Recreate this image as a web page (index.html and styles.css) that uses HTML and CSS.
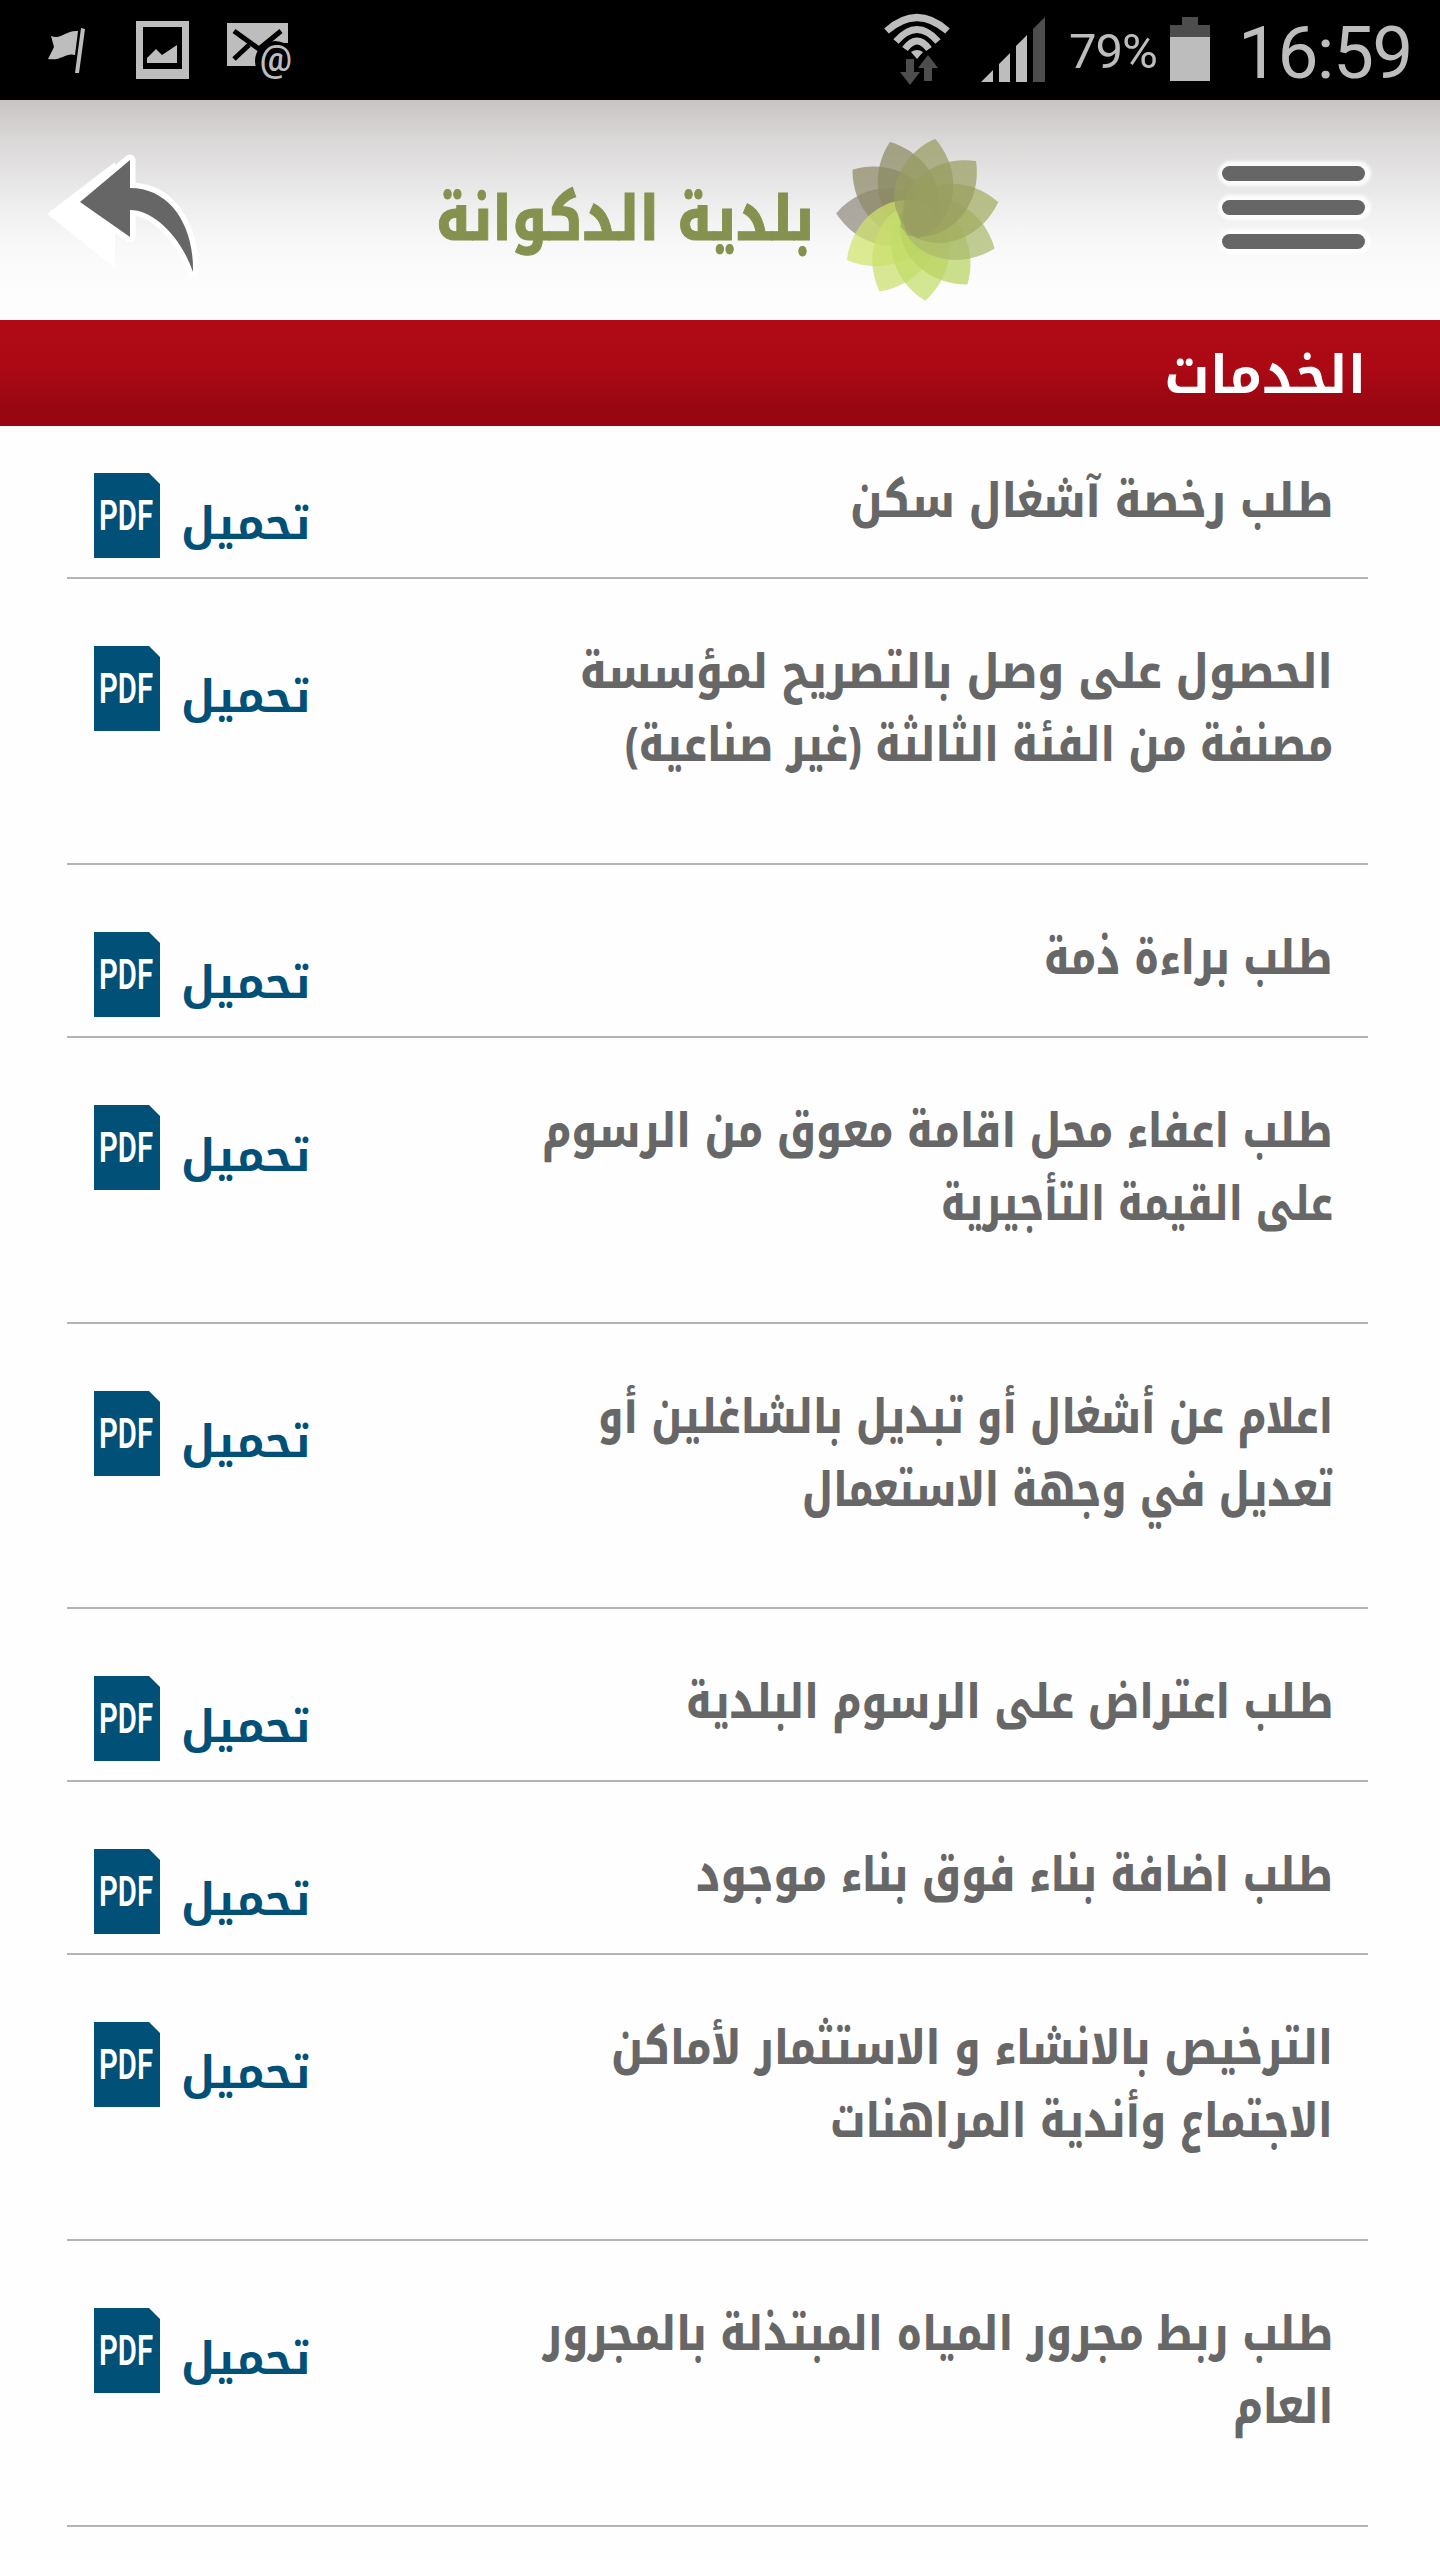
FILE: index.html
```
<!DOCTYPE html>
<html lang="ar" dir="rtl">
<head>
    <meta charset="utf-8">
    <title>بلدية الدكوانة</title>
    <link rel="stylesheet" href="styles.css">
</head>
<body>
    <div class="status-bar">
        <div class="status-left">
            <svg class="flag" width="38" height="46" viewBox="0 0 38 46">
                <path d="M3 8 C14 12 17 2 30 3 L27 27 C18 24 14 33 0 31 L6 19Z M33 0 L37 1 L31 45 L27 45Z"/>
            </svg>
            <svg class="photo" width="53" height="58" viewBox="0 0 53 58">
                <path fill-rule="evenodd" d="M0 0H53V58H0Z M7 6V48H46V6Z"/>
                <path d="M11 42V37L20 28L26 34L41 24V42Z"/>
            </svg>
            <svg class="mail" width="66" height="56" viewBox="0 0 66 56">
                <path d="M0 0H61V20H48L34 30L29 43H0Z"/>
                <path class="cut" d="M7 8L32 26L54 8M7 36L22 22"/>
                <circle cx="48" cy="38" r="20" fill="#000"/>
                <text x="49" y="48" text-anchor="middle">@</text>
            </svg>
        </div>
        <div class="status-right">
            <svg class="wifi" width="66" height="84" viewBox="0 0 66 84">
                <path class="wave" d="M2.500 24Q33 -3 63.500 24M12 34.500Q33 10.500 54 34.500M21 42Q33 26 45 42"/>
                <path d="M27 45Q33 41 39 45L33 52Z"/>
                <path class="dim" d="M22 52H30V65H36L26 78L16 65H22ZM40 74V61H34L44 48L54 61H48V74Z"/>
            </svg>
            <svg class="signal" width="64" height="65" viewBox="0 0 64 65">
                <path d="M0 65L12 53V65ZM18 47L29 36V65H18ZM35 29L46 18V65H35Z"/>
                <path class="dim" d="M52 12L64 0V65H52Z"/>
            </svg>
            <span class="percent">79%</span>
            <svg class="battery" width="40" height="64" viewBox="0 0 40 64">
                <path class="dim" d="M12 0H28V8H40V20H0V8H12Z"/>
                <path d="M0 20H40V64H0Z"/>
            </svg>
            <span class="clock">16:59</span>
        </div>
    </div>

    <header>
        <div class="menu">
            <i></i>
            <i></i>
            <i></i>
        </div>
        <svg class="logo" width="570" height="180" viewBox="0 0 570 180" direction="rtl">
            <defs>
                <path id="petal" d="M0 -82C19 -68 29 -47 29 -27C29 -6 18 10 4 19C-16 10 -29 -6 -29 -27C-29 -47 -19 -68 0 -82Z"/>
            </defs>
            <text x="384" y="120" textLength="378" lengthAdjust="spacingAndGlyphs">بلدية الدكوانة</text>
            <g class="flower" transform="translate(488 99)">
                <use href="#petal" fill="#918c80" transform="rotate(-86)"/>
                <use href="#petal" fill="#8d8968" transform="rotate(-53)"/>
                <use href="#petal" fill="#8b8b62" transform="rotate(-20)"/>
                <use href="#petal" fill="#d0e36c" transform="rotate(-120)"/>
                <use href="#petal" fill="#c9df6c" transform="rotate(-152)"/>
                <use href="#petal" fill="#c2dd66" transform="rotate(175)"/>
                <use href="#petal" fill="#b9d261" transform="rotate(143)"/>
                <use href="#petal" fill="#aab96c" transform="rotate(111)"/>
                <use href="#petal" fill="#a2ac60" transform="rotate(78)"/>
                <use href="#petal" fill="#999e5f" transform="rotate(45)"/>
                <use href="#petal" fill="#979c60" transform="rotate(12)"/>
            </g>
        </svg>
        <svg class="back" width="155" height="130" viewBox="0 0 155 130">
            <path class="shade" d="M2 64L70 12V118Z"/>
            <path class="outline" d="M35 52L85 10V38C125 38 149 75 148 122C135 85 108 60 85 60V87Z"/>
            <path class="arrow" d="M35 52L85 10V38C125 38 149 75 148 122C135 85 108 60 85 60V87Z"/>
        </svg>
    </header>

    <h1>الخدمات</h1>

    <ul id="services" class="services"></ul>

    <script>
        // each line of a title with the width it is set to
        const services = [
            [['طلب رخصة آشغال سكن', 483]],
            [['الحصول على وصل بالتصريح لمؤسسة', 753], ['مصنفة من الفئة الثالثة (غير صناعية)', 708]],
            [['طلب براءة ذمة', 289]],
            [['طلب اعفاء محل اقامة معوق من الرسوم', 791], ['على القيمة التأجيرية', 392]],
            [['اعلام عن أشغال أو تبديل بالشاغلين أو', 735], ['تعديل في وجهة الاستعمال', 531]],
            [['طلب اعتراض على الرسوم البلدية', 647]],
            [['طلب اضافة بناء فوق بناء موجود', 637]],
            [['الترخيص بالانشاء و الاستثمار لأماكن', 722], ['الاجتماع وأندية المراهنات', 503]],
            [['طلب ربط مجرور المياه المبتذلة بالمجرور', 790], ['العام', 100]]
        ];

        const list = document.getElementById('services');
        services.forEach(lines => {
            list.innerHTML += `
                <li class="${lines.length > 1 ? 'double' : ''}">
                    <div class="title">
                        ${lines.map(line => `<span data-width="${line[1]}">${line[0]}</span>`).join('')}
                    </div>
                    <a class="download">
                        <span>تحميل</span>
                        <svg width="66" height="85" viewBox="0 0 66 85" direction="ltr">
                            <path d="M0 0H55L66 11V85H0Z"/>
                            <text x="5" y="57" textLength="54" lengthAdjust="spacingAndGlyphs">PDF</text>
                        </svg>
                    </a>
                </li>
            `;
        });

        document.querySelectorAll('.title span').forEach(span => {
            span.style.transform = `scaleX(${span.dataset.width / span.offsetWidth})`;
        });
    </script>
</body>
</html>
```
FILE: styles.css
```
* {
    box-sizing: border-box;
}
body {
    margin: 0;
    background-color: #fefefe;
    font-family: "Noto Kufi Arabic", "DejaVu Sans Condensed", "DejaVu Sans", sans-serif;
    height: 2560px;
    overflow: hidden;
}
svg {
    display: block;
    overflow: visible;
}
.status-bar {
    direction: ltr;
    display: flex;
    justify-content: space-between;
    height: 100px;
    padding: 0 32px 0 48px;
    background-color: #000;
    color: #bdbdbd;
    font-family: Roboto, sans-serif;
}
.status-bar svg {
    fill: #bdbdbd;
    flex: none;
}
.status-bar .dim {
    fill: #4d4d4d;
}
.status-left, .status-right {
    display: flex;
    align-items: flex-start;
}
.flag {
    margin-top: 28px;
}
.photo {
    margin: 21px 0 0 50px;
}
.mail {
    margin: 23px 0 0 38px;
}
.mail .cut {
    fill: none;
    stroke: #000;
    stroke-width: 5;
}
.mail text {
    font-size: 36px;
    font-weight: 500;
}
.wifi {
    margin-top: 7px;
}
.wifi .wave {
    fill: none;
    stroke: #bdbdbd;
    stroke-width: 7;
}
.signal {
    margin: 17px 0 0 31px;
}
.percent {
    width: 90px;
    margin: 0 0 0 24px;
    font-size: 49px;
    line-height: 103px;
    letter-spacing: -1px;
}
.battery {
    margin: 17px 0 0 11px;
}
.clock {
    width: 170px;
    margin-left: 28px;
    font-size: 73px;
    line-height: 106px;
    letter-spacing: -1.6px;
}
header {
    display: flex;
    justify-content: space-between;
    height: 220px;
    padding: 36px 75px 0 45px;
    background: linear-gradient(#c8c4c4, #dad7d7 18%, #ececec 45%, #f8f8f8 65%, #fdfdfd 85%);
}
.menu {
    display: flex;
    flex-direction: column;
    gap: 19px;
    padding-top: 30px;
}
.menu i {
    width: 143px;
    height: 15px;
    border-radius: 8px;
    background-color: #666;
    box-shadow: 1px 0 3px 5px rgba(255, 255, 255, .85);
}
.logo {
    margin-top: -16px;
    margin-right: 222px;
    margin-left: auto;
}
.logo text {
    font-size: 62px;
    font-weight: 800;
    fill: #84914f;
    stroke: #84914f;
    stroke-width: 1;
}
.flower use {
    opacity: .72;
}
.back {
    margin-top: 14px;
}
.back .shade {
    fill: #fff;
}
.back .outline {
    fill: none;
    stroke: #fff;
    stroke-width: 11;
    stroke-linejoin: round;
}
.back .arrow {
    fill: #666;
}
h1 {
    height: 106px;
    margin: 0;
    padding-right: 74px;
    background: linear-gradient(#b00a15, #ac0915 45%, #960711 85%);
    color: #fff;
    font-size: 52.5px;
    font-weight: 700;
    line-height: 112px;
}
.services {
    margin: 0;
    padding: 0 72px 0 67px;
    list-style: none;
}
.services li {
    display: flex;
    justify-content: space-between;
    height: 173px;
    padding: 67px 35px 0 27px;
    border-bottom: 2px solid #b4b4b4;
}
.services li:first-child {
    height: 153px;
    padding-top: 47px;
}
.services li.double {
    height: 285.8px;
}
.title {
    display: flex;
    flex-direction: column;
    align-items: flex-start;
    margin-top: -10px;
    color: #676767;
    font-size: 48px;
    font-weight: 800;
    line-height: 73px;
    white-space: nowrap;
}
.services li:first-child .title {
    margin-top: -8px;
}
.title span {
    transform-origin: right top;
}
.download {
    display: flex;
    gap: 21px;
    color: #015078;
}
.download span {
    margin-top: 9px;
    font-size: 44.5px;
    font-weight: 700;
    line-height: 85px;
}
.download svg {
    fill: #015078;
}
.download text {
    fill: #fff;
    font-family: Roboto, sans-serif;
    font-size: 43px;
    font-weight: 600;
}
```
